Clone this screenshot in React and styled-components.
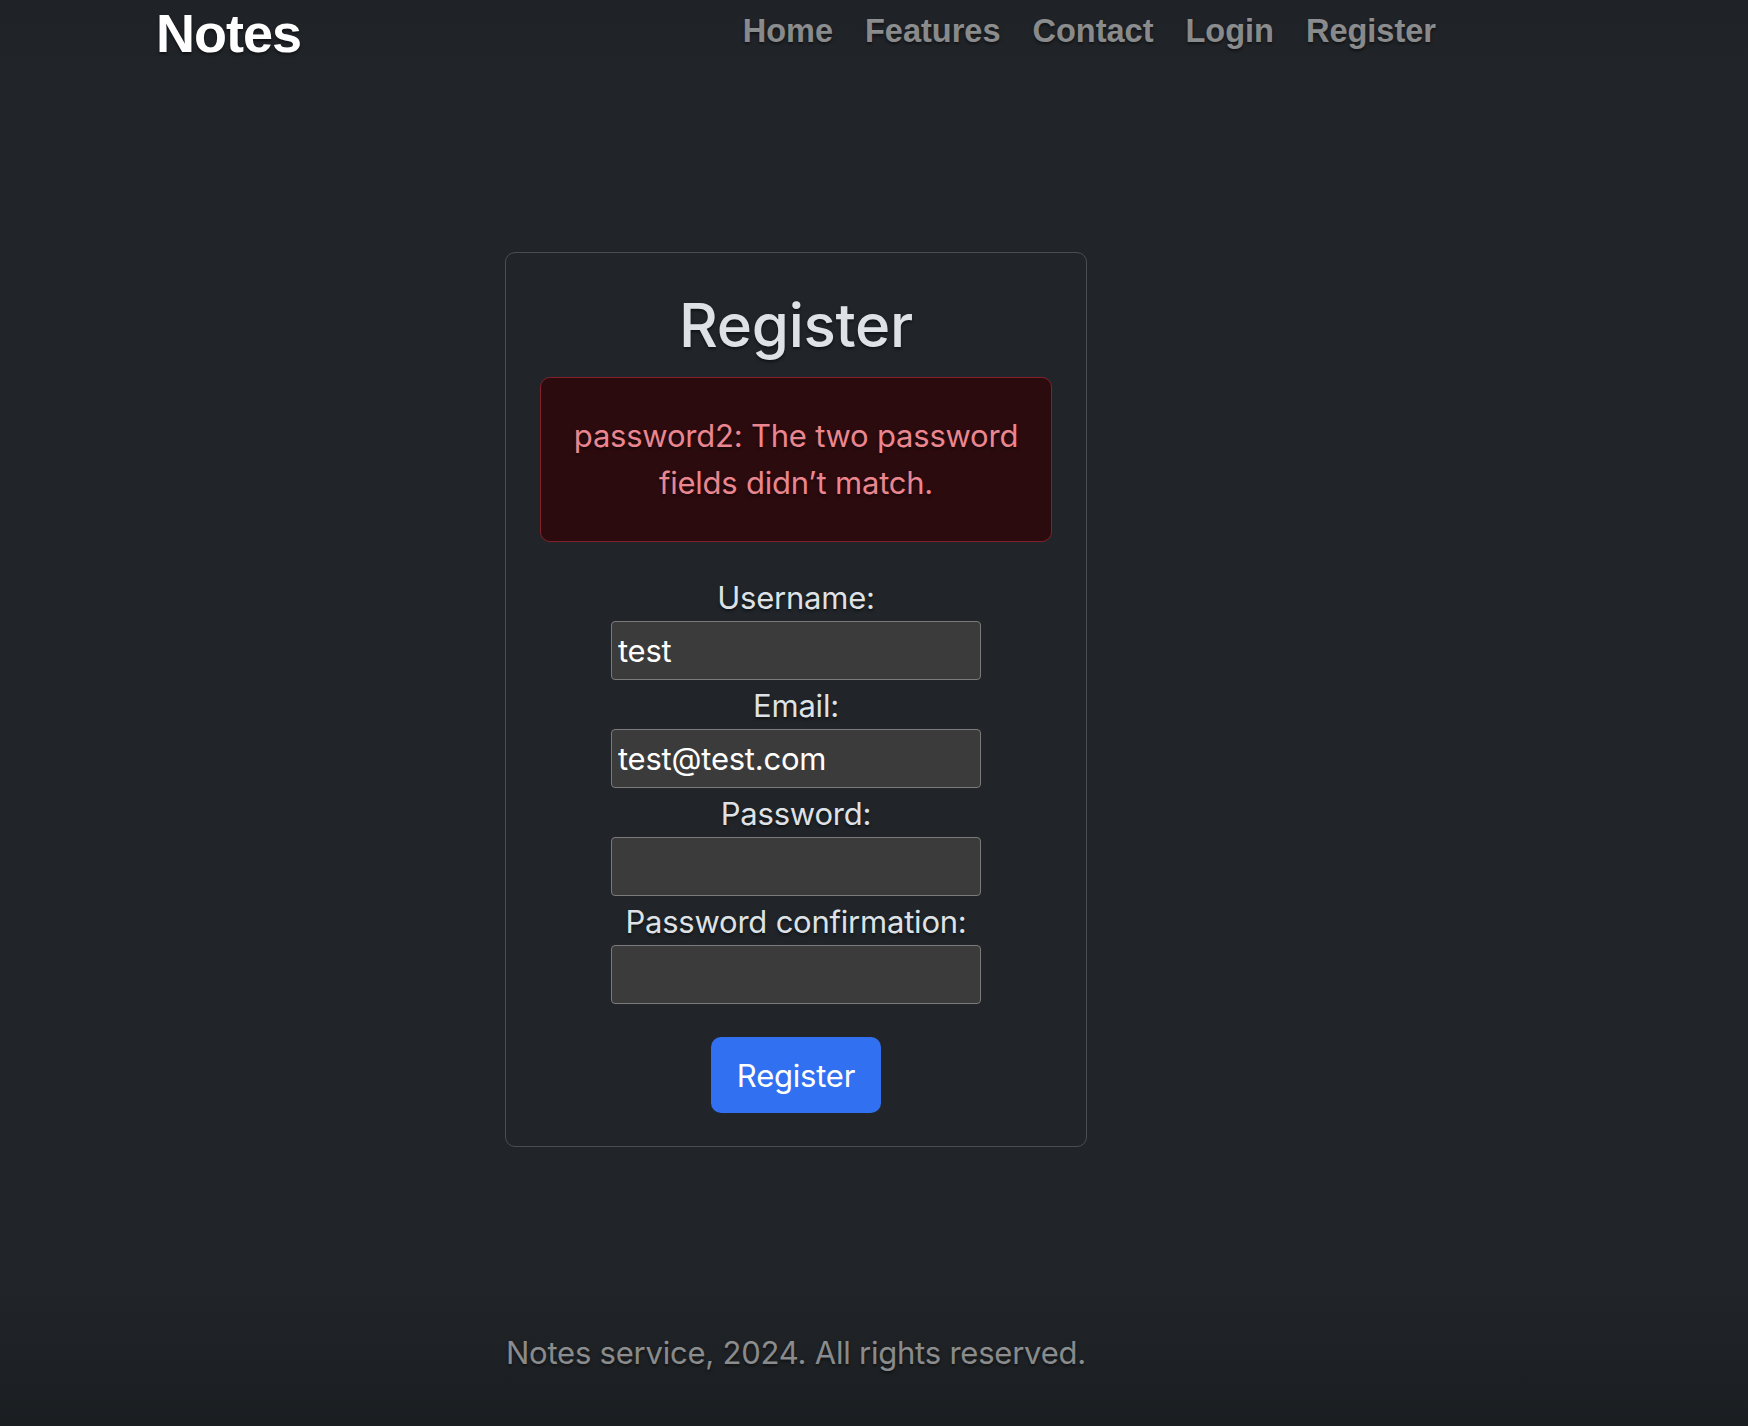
import React from 'react';
import styled, { createGlobalStyle } from 'styled-components';

const GlobalStyle = createGlobalStyle`
  html, body {
    margin: 0;
    padding: 0;
  }
  body {
    background: linear-gradient(
      to bottom,
      #1f2226 0,
      #212529 90px,
      #212529 calc(100% - 150px),
      #1b1e21 100%
    );
    min-height: 100vh;
    color: #dee2e6;
    font-family: Inter, "Noto Sans", sans-serif;
    font-size: 31px;
    line-height: 1.5;
    letter-spacing: -0.22px;
    text-shadow: 0 1.5px 3px rgba(0, 0, 0, 0.5);
  }
`;

const Page = styled.div`
  min-height: 100vh;
  display: flex;
  flex-direction: column;
  width: 1280px;
  margin-left: 156px;
`;

const Header = styled.header`
  display: flex;
  justify-content: space-between;
  align-items: flex-start;
  height: 65px;
`;

const Brand = styled.div`
  margin-top: 1px;
  font-family: "Liberation Sans", Arial, sans-serif;
  font-weight: 700;
  font-size: 54px;
  line-height: 1.2;
  letter-spacing: -1px;
  color: #fff;
`;

const Nav = styled.nav`
  display: flex;
  gap: 32px;
  padding-top: 7px;
`;

const NavLink = styled.a`
  font-family: "Liberation Sans", Arial, sans-serif;
  font-weight: 700;
  font-size: 32.5px;
  line-height: 1.5;
  letter-spacing: 0;
  color: rgba(255, 255, 255, 0.5);
  text-decoration: none;
`;

const Main = styled.main`
  display: flex;
  justify-content: center;
  margin-top: 187px;
`;

const Card = styled.div`
  width: 582px;
  box-sizing: border-box;
  border: 1.5px solid #4a4e53;
  border-radius: 10px;
  padding: 35px 34px 33px;
  text-align: center;
`;

const Title = styled.h1`
  margin: 1px 0 16px;
  font-size: 60px;
  font-weight: 500;
  line-height: 1.2;
  letter-spacing: -0.3px;
  color: #dee2e6;
`;

const Alert = styled.div`
  background: #2c0b0e;
  border: 1.5px solid #842029;
  border-radius: 10px;
  color: #ea868f;
  padding: 35px 30px;
  margin-bottom: 30px;
`;

const Form = styled.form`
  display: flex;
  flex-direction: column;
  align-items: center;
`;

const Label = styled.label`
  display: block;
  height: 49px;
  padding-top: 3px;
  box-sizing: border-box;
  line-height: 46.5px;
  color: #dee2e6;
`;

const Input = styled.input`
  width: 370px;
  height: 59px;
  box-sizing: border-box;
  background: #3b3b3b;
  border: 1.5px solid #7a7a7a;
  border-radius: 4px;
  padding: 0 6px;
  font-family: Inter, "Noto Sans", sans-serif;
  font-size: 31px;
  letter-spacing: -0.22px;
  color: #fff;
  outline: none;
`;

const Button = styled.button`
  margin-top: 33px;
  height: 76px;
  padding: 0 26px;
  border: none;
  border-radius: 10px;
  background: #3170f1;
  color: #fff;
  font-family: Inter, "Noto Sans", sans-serif;
  font-size: 31px;
  letter-spacing: -0.22px;
  cursor: pointer;
`;

const Footer = styled.footer`
  margin-top: auto;
  padding-bottom: 50px;
  text-align: center;
  color: rgba(255, 255, 255, 0.5);
`;

const fields = [
  { id: 'username', label: 'Username:', type: 'text', value: 'test' },
  { id: 'email', label: 'Email:', type: 'email', value: 'test@test.com' },
  { id: 'password1', label: 'Password:', type: 'password', value: '' },
  { id: 'password2', label: 'Password confirmation:', type: 'password', value: '' },
];

export default function App() {
  return (
    <>
      <GlobalStyle />
      <Page>
        <Header>
          <Brand>Notes</Brand>
          <Nav>
            <NavLink href="#">Home</NavLink>
            <NavLink href="#">Features</NavLink>
            <NavLink href="#">Contact</NavLink>
            <NavLink href="#">Login</NavLink>
            <NavLink href="#">Register</NavLink>
          </Nav>
        </Header>

        <Main>
          <Card>
            <Title>Register</Title>
            <Alert>password2: The two password fields didn’t match.</Alert>
            <Form onSubmit={(e) => e.preventDefault()}>
              {fields.map((f) => (
                <React.Fragment key={f.id}>
                  <Label htmlFor={f.id}>{f.label}</Label>
                  <Input id={f.id} type={f.type} defaultValue={f.value} />
                </React.Fragment>
              ))}
              <Button type="submit">Register</Button>
            </Form>
          </Card>
        </Main>

        <Footer>Notes service, 2024. All rights reserved.</Footer>
      </Page>
    </>
  );
}
